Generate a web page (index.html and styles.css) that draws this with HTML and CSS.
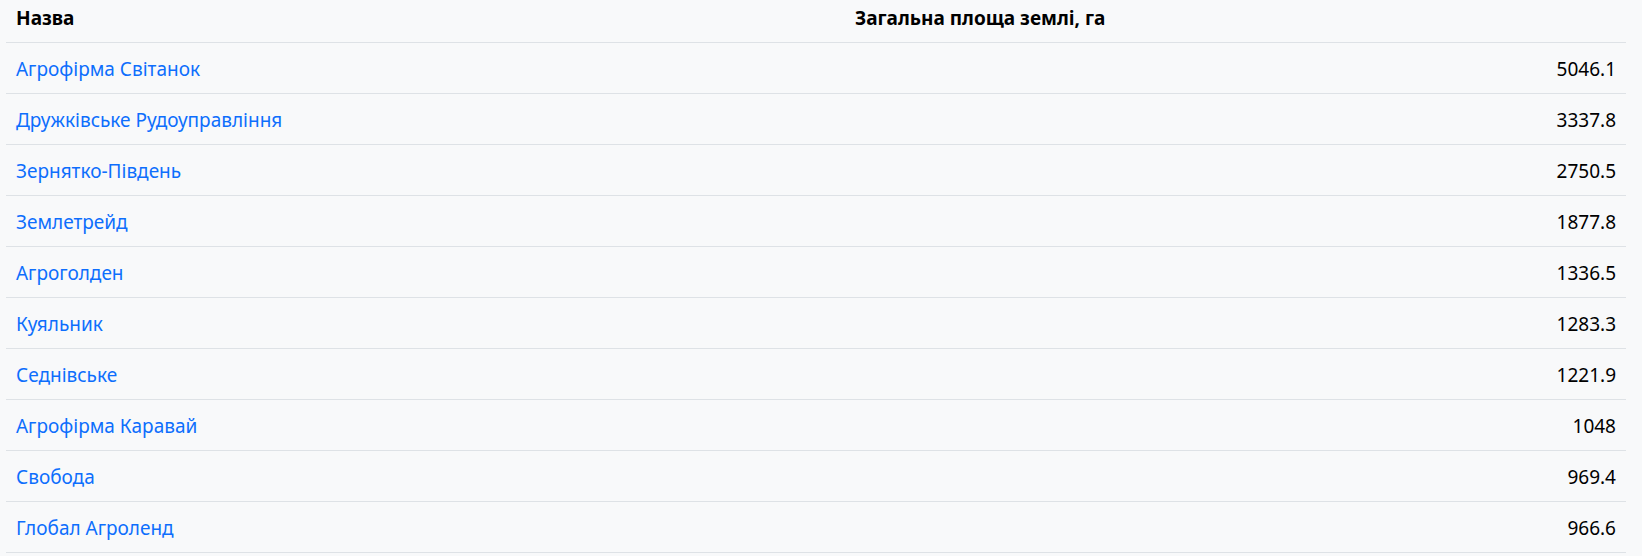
FILE: index.html
```html
<!DOCTYPE html>
<html lang="uk">
<head>
<meta charset="utf-8">
<title>Землі</title>
<link rel="stylesheet" href="styles.css">
</head>
<body>
<table class="land-table">
  <thead>
    <tr><th class="col-name">Назва</th><th class="col-area">Загальна площа землі, га</th></tr>
  </thead>
  <tbody>
    <tr><td><a href="#">Агрофірма Світанок</a></td><td class="num">5046.1</td></tr>
    <tr><td><a href="#">Дружківське Рудоуправління</a></td><td class="num">3337.8</td></tr>
    <tr><td><a href="#">Зернятко-Південь</a></td><td class="num">2750.5</td></tr>
    <tr><td><a href="#">Землетрейд</a></td><td class="num">1877.8</td></tr>
    <tr><td><a href="#">Агроголден</a></td><td class="num">1336.5</td></tr>
    <tr><td><a href="#">Куяльник</a></td><td class="num">1283.3</td></tr>
    <tr><td><a href="#">Седнівське</a></td><td class="num">1221.9</td></tr>
    <tr><td><a href="#">Агрофірма Каравай</a></td><td class="num">1048</td></tr>
    <tr><td><a href="#">Свобода</a></td><td class="num">969.4</td></tr>
    <tr><td><a href="#">Глобал Агроленд</a></td><td class="num">966.6</td></tr>
  </tbody>
</table>
</body>
</html>
```

FILE: styles.css
```css
html, body {
  margin: 0;
  background: #f8f9fa;
}
body {
  padding: 0 16px 0 6px;
  font-family: "Noto Sans", "Open Sans", sans-serif;
  font-size: 19px;
  color: #000;
}
.land-table {
  width: 100%;
  border-collapse: collapse;
}
.land-table th {
  font-weight: 700;
  text-align: left;
  height: 42px;
  padding: 0 10px 5px;
  box-sizing: border-box;
  border-bottom: 1px solid #dee2e6;
}
.land-table th.col-name {
  width: 839px;
}
.land-table td {
  height: 48px;
  padding: 2px 10px 0;
  border-bottom: 1px solid #dee2e6;
}
.land-table td.num {
  text-align: right;
}
.land-table a {
  color: #0d6efd;
  text-decoration: none;
}
```
